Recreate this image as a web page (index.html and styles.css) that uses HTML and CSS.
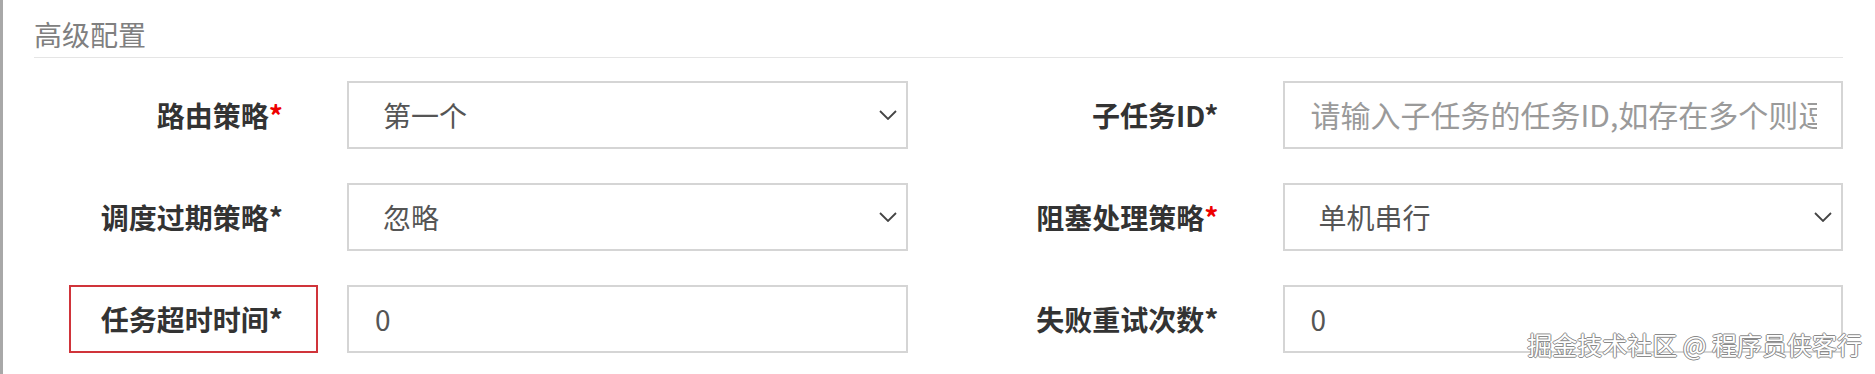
FILE: index.html
```html
<!DOCTYPE html>
<html lang="zh-CN">
  <head>
    <meta charset="UTF-8" />
    <meta name="viewport" content="width=device-width, initial-scale=1.0" />
    <title>高级配置</title>

    <link rel="stylesheet" href="styles.css">
  </head>

  <body>
    <div id="panel">
      <div class="legend">高级配置</div>

      <div class="row">
        <div class="group">
          <label class="label">路由策略<span class="req">*</span></label>
          <div class="control">
            <select class="field select">
              <option>第一个</option>
              <option>最后一个</option>
              <option>轮询</option>
              <option>随机</option>
            </select>
            <svg class="arrow" width="18" height="10" viewBox="0 0 18 10"><path d="M1 1 L9 9 L17 1" fill="none" stroke="#444" stroke-width="1.8"/></svg>
          </div>
        </div>
        <div class="group">
          <label class="label">子任务ID*</label>
          <div class="control">
            <input class="field" type="text" placeholder="请输入子任务的任务ID,如存在多个则逗号分隔" />
          </div>
        </div>
      </div>

      <div class="row">
        <div class="group">
          <label class="label">调度过期策略*</label>
          <div class="control">
            <select class="field select">
              <option>忽略</option>
              <option>立即执行一次</option>
            </select>
            <svg class="arrow" width="18" height="10" viewBox="0 0 18 10"><path d="M1 1 L9 9 L17 1" fill="none" stroke="#444" stroke-width="1.8"/></svg>
          </div>
        </div>
        <div class="group">
          <label class="label">阻塞处理策略<span class="req">*</span></label>
          <div class="control">
            <select class="field select">
              <option>单机串行</option>
              <option>丢弃后续调度</option>
              <option>覆盖之前调度</option>
            </select>
            <svg class="arrow" width="18" height="10" viewBox="0 0 18 10"><path d="M1 1 L9 9 L17 1" fill="none" stroke="#444" stroke-width="1.8"/></svg>
          </div>
        </div>
      </div>

      <div class="row">
        <div class="group">
          <label class="label marked">任务超时时间*</label>
          <div class="control">
            <input class="field" type="text" value="0" />
          </div>
        </div>
        <div class="group">
          <label class="label">失败重试次数*</label>
          <div class="control">
            <input class="field" type="text" value="0" />
          </div>
        </div>
      </div>
    </div>

    <div class="watermark">掘金技术社区 @ 程序员侠客行</div>
  </body>
</html>
```

FILE: styles.css
```css
body {
  margin: 0;
  background-color: #fff;
  font-family: "Noto Sans CJK SC", "Microsoft YaHei", sans-serif;
}

#panel {
  height: 100vh;
  box-sizing: border-box;
  border-left: 3px solid #a8a8a8;
  padding: 16px 32px 0 31px;
}

.legend {
  font-size: 28px;
  line-height: 36px;
  color: #808080;
  padding-bottom: 5px;
  border-bottom: 1px solid #e5e5e5;
  margin-bottom: 23px;
}

.row {
  display: flex;
  gap: 97px;
  padding-left: 35px;
  margin-bottom: 34px;
}

.group {
  flex: 1;
  display: flex;
  align-items: center;
}

.label {
  width: 249px;
  height: 68px;
  box-sizing: border-box;
  margin-right: 29px;
  padding-right: 33px;
  border: 2px solid transparent;
  display: flex;
  align-items: center;
  justify-content: flex-end;
  font-size: 28px;
  font-weight: bold;
  color: #333;
  white-space: nowrap;
}

.label.marked {
  border-color: #d0343a;
}

.req {
  color: #e00;
}

.control {
  flex: 1;
  position: relative;
}

.field {
  display: block;
  width: 100%;
  height: 68px;
  box-sizing: border-box;
  border: 2px solid #d5d5d5;
  border-radius: 0;
  background-color: #fff;
  padding: 0 24px 0 26px;
  font-family: inherit;
  font-size: 28px;
  color: #555;
  outline: none;
}

.field::placeholder {
  color: #9a9a9a;
  font-size: 30px;
}

.select {
  appearance: none;
  -webkit-appearance: none;
  padding-left: 34px;
}

.arrow {
  position: absolute;
  right: 11px;
  top: 50%;
  transform: translateY(-50%);
  pointer-events: none;
}

.watermark {
  position: absolute;
  right: 13px;
  bottom: 17px;
  font-size: 25px;
  line-height: 26px;
  color: #fff;
  text-shadow: -1px 0 #8a8a8a, 1px 0 #8a8a8a, 0 -1px #8a8a8a, 0 1px #8a8a8a;
  white-space: nowrap;
}
```
